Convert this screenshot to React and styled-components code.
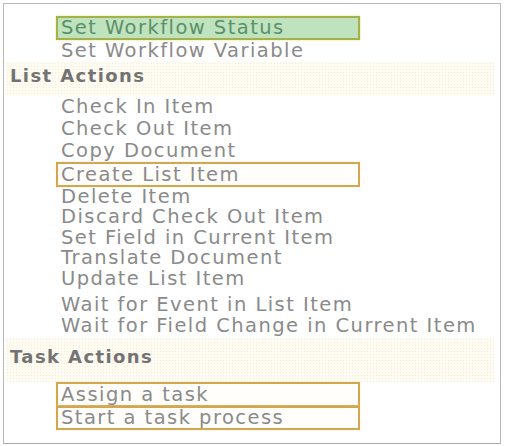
import React from "react";
import styled, { createGlobalStyle } from "styled-components";

const GlobalStyle = createGlobalStyle`
  body {
    margin: 0;
    background: #ffffff;
    font-family: "DejaVu Sans", "Noto Sans", sans-serif;
  }
`;

const sections = [
  {
    items: [
      { label: "Set Workflow Status", mark: "green", h: 24, top: 12 },
      { label: "Set Workflow Variable", h: 21 },
    ],
  },
  {
    title: "List Actions",
    bandTop: 1,
    bandH: 34,
    items: [
      { label: "Check In Item", h: 22 },
      { label: "Check Out Item", h: 22 },
      { label: "Copy Document", h: 22 },
      { label: "Create List Item", mark: "orange", h: 25 },
      { label: "Delete Item", h: 20 },
      { label: "Discard Check Out Item", h: 20 },
      { label: "Set Field in Current Item", h: 21 },
      { label: "Translate Document", h: 20 },
      { label: "Update List Item", h: 21 },
      { label: "Wait for Event in List Item", h: 21, top: 5 },
      { label: "Wait for Field Change in Current Item", h: 22 },
    ],
  },
  {
    title: "Task Actions",
    bandTop: 1,
    bandH: 44,
    items: [
      { label: "Assign a task", mark: "orange", h: 25, top: 0 },
      { label: "Start a task process", mark: "orange", h: 24, top: -1 },
    ],
  },
];

const App = () => {
  return (
    <>
      <GlobalStyle />
      <Frame>
        {sections.map((section, i) => (
          <Section key={i}>
            {section.title && (
              <Band $top={section.bandTop} $h={section.bandH}>
                <Heading>{section.title}</Heading>
              </Band>
            )}
            {section.items.map((item) => (
              <Item key={item.label} $h={item.h} $top={item.top || 0} $mark={item.mark}>
                <span>{item.label}</span>
              </Item>
            ))}
          </Section>
        ))}
      </Frame>
    </>
  );
};

const Frame = styled.div`
  box-sizing: border-box;
  margin: 3px 0 0 3px;
  width: 498px;
  height: 441px;
  border: 1px solid #b9b9b9;
  border-bottom-color: #a9a9a9;
  background: #ffffff;
`;

const Section = styled.div`
  display: flex;
  flex-direction: column;
`;

const Band = styled.div`
  box-sizing: border-box;
  display: flex;
  align-items: center;
  margin: ${(p) => p.$top}px 6px 0 2px;
  height: ${(p) => p.$h}px;
  padding: 0 0 6px 4px;
  background-color: #fdfbf2;
  background-image: radial-gradient(#f6efd8 0.8px, transparent 0.9px);
  background-size: 3px 3px;
`;

const Heading = styled.h3`
  margin: 0;
  font-size: 18px;
  line-height: 1;
  font-weight: 700;
  color: #737373;
  letter-spacing: 1.4px;
`;

const markStyles = {
  green: `
    background: #bfe3bf;
    border: 2px solid #a3b347;
    box-shadow: 0 0 2px #e6e08a;
    color: #5c9068;
  `,
  orange: `
    background: #fffefa;
    border: 2px solid #d3a650;
    box-shadow: 0 0 1px #f1dc9e;
    color: #8a8a8a;
  `,
};

const Item = styled.div`
  box-sizing: border-box;
  display: flex;
  align-items: center;
  height: ${(p) => p.$h}px;
  margin: ${(p) => p.$top}px 0 0 52px;
  width: ${(p) => (p.$mark ? "304px" : "auto")};
  padding-left: ${(p) => (p.$mark ? 3 : 5)}px;
  font-size: 19.5px;
  color: #8a8a8a;
  letter-spacing: 1.45px;
  white-space: nowrap;
  ${(p) => (p.$mark ? markStyles[p.$mark] : "")}

  span {
    line-height: 18px;
  }
`;

export default App;
